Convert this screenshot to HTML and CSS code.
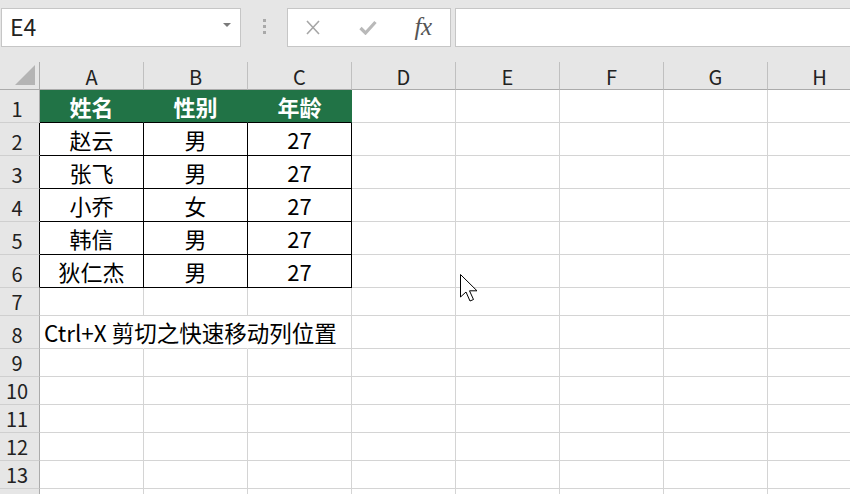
FILE: index.html
```html
<!DOCTYPE html>
<html lang="zh-CN">
<head>
<meta charset="utf-8">
<title>Excel</title>
<link rel="stylesheet" href="styles.css">
</head>
<body>
<div class="app">
  <div class="toolbar">
    <div class="namebox"><span class="ref">E4</span><span class="caret"></span></div>
    <div class="grip"><i></i><i></i><i></i></div>
    <div class="fbtns">
      <span class="slot"><svg width="14" height="15" viewBox="0 0 14 15"><path d="M1 1 L13 14 M13 1 L1 14" stroke="#a6a6a6" stroke-width="1.6" fill="none"/></svg></span>
      <span class="slot"><svg width="18" height="15" viewBox="0 0 18 15"><path d="M1.5 8 L6.5 13 L16.5 2" stroke="#b9b9b9" stroke-width="3.2" fill="none"/></svg></span>
      <span class="slot fx">fx</span>
    </div>
    <div class="formula"></div>
  </div>
  <div class="sheet">
    <div class="row hdr">
      <div class="corner"><span class="tri"></span></div>
      <div class="ch">A</div><div class="ch">B</div><div class="ch">C</div><div class="ch">D</div><div class="ch">E</div><div class="ch">F</div><div class="ch">G</div><div class="ch">H</div>
    </div>
    <div class="row tall">
      <div class="rh">1</div>
      <div class="c th">姓名</div><div class="c th">性别</div><div class="c th">年龄</div><div class="c"></div><div class="c"></div><div class="c"></div><div class="c"></div><div class="c"></div>
    </div>
    <div class="row tall">
      <div class="rh bk">2</div>
      <div class="c tb">赵云</div><div class="c tb">男</div><div class="c tb">27</div><div class="c"></div><div class="c"></div><div class="c"></div><div class="c"></div><div class="c"></div>
    </div>
    <div class="row tall">
      <div class="rh bk">3</div>
      <div class="c tb">张飞</div><div class="c tb">男</div><div class="c tb">27</div><div class="c"></div><div class="c"></div><div class="c"></div><div class="c"></div><div class="c"></div>
    </div>
    <div class="row tall">
      <div class="rh bk">4</div>
      <div class="c tb">小乔</div><div class="c tb">女</div><div class="c tb">27</div><div class="c"></div><div class="c"></div><div class="c"></div><div class="c"></div><div class="c"></div>
    </div>
    <div class="row tall">
      <div class="rh bk">5</div>
      <div class="c tb">韩信</div><div class="c tb">男</div><div class="c tb">27</div><div class="c"></div><div class="c"></div><div class="c"></div><div class="c"></div><div class="c"></div>
    </div>
    <div class="row tall">
      <div class="rh bk">6</div>
      <div class="c tb">狄仁杰</div><div class="c tb">男</div><div class="c tb">27</div><div class="c"></div><div class="c"></div><div class="c"></div><div class="c"></div><div class="c"></div>
    </div>
    <div class="row">
      <div class="rh">7</div>
      <div class="c"></div><div class="c"></div><div class="c"></div><div class="c"></div><div class="c"></div><div class="c"></div><div class="c"></div><div class="c"></div>
    </div>
    <div class="row tall">
      <div class="rh">8</div>
      <div class="c nr note"><span>Ctrl+X 剪切之快速移动列位置</span></div><div class="c nr"></div><div class="c"></div><div class="c"></div><div class="c"></div><div class="c"></div><div class="c"></div><div class="c"></div>
    </div>
    <div class="row">
      <div class="rh">9</div>
      <div class="c"></div><div class="c"></div><div class="c"></div><div class="c"></div><div class="c"></div><div class="c"></div><div class="c"></div><div class="c"></div>
    </div>
    <div class="row">
      <div class="rh">10</div>
      <div class="c"></div><div class="c"></div><div class="c"></div><div class="c"></div><div class="c"></div><div class="c"></div><div class="c"></div><div class="c"></div>
    </div>
    <div class="row">
      <div class="rh">11</div>
      <div class="c"></div><div class="c"></div><div class="c"></div><div class="c"></div><div class="c"></div><div class="c"></div><div class="c"></div><div class="c"></div>
    </div>
    <div class="row">
      <div class="rh">12</div>
      <div class="c"></div><div class="c"></div><div class="c"></div><div class="c"></div><div class="c"></div><div class="c"></div><div class="c"></div><div class="c"></div>
    </div>
    <div class="row">
      <div class="rh">13</div>
      <div class="c"></div><div class="c"></div><div class="c"></div><div class="c"></div><div class="c"></div><div class="c"></div><div class="c"></div><div class="c"></div>
    </div>
    <div class="row">
      <div class="rh"></div>
      <div class="c"></div><div class="c"></div><div class="c"></div><div class="c"></div><div class="c"></div><div class="c"></div><div class="c"></div><div class="c"></div>
    </div>
  </div>
  <svg class="cursor" width="20" height="30" viewBox="0 0 20 30">
    <path d="M0.5 0.5 L0.5 23 L6 18 L10 27 L13.5 25.5 L9.5 16.8 L17 16.8 Z" fill="#fff" stroke="#000" stroke-width="1"/>
  </svg>
</div>
</body>
</html>
```

FILE: styles.css
```css
html, body {
  margin: 0;
  padding: 0;
  background: #ffffff;
  overflow: hidden;
}

.app {
  position: relative;
  width: 850px;
  height: 494px;
  overflow: hidden;
  font-family: "Noto Sans CJK SC", sans-serif;
  color: #000;
}

.toolbar {
  height: 62px;
  box-sizing: border-box;
  background: #e6e6e6;
  display: flex;
  align-items: flex-start;
  padding-top: 8px;
}

.namebox {
  margin-left: 1px;
  width: 240px;
  height: 39px;
  box-sizing: border-box;
  border: 1px solid #c6c6c6;
  background: #fff;
  display: flex;
  align-items: center;
  justify-content: space-between;
  padding: 0 9px 0 8px;
}

.ref {
  font-size: 23px;
  line-height: 1;
  color: #222;
  margin-top: -2px;
}

.caret {
  width: 0;
  height: 0;
  border-left: 4px solid transparent;
  border-right: 4px solid transparent;
  border-top: 4px solid #7a7a7a;
  margin-top: -5px;
}

.grip {
  width: 46px;
  height: 39px;
  display: flex;
  flex-direction: column;
  align-items: center;
  padding-top: 11px;
  box-sizing: border-box;
  gap: 3px;
}

.grip i {
  display: block;
  width: 3px;
  height: 3px;
  background: #a9a9a9;
}

.fbtns {
  width: 164px;
  height: 39px;
  box-sizing: border-box;
  border: 1px solid #c6c6c6;
  background: #fff;
  display: flex;
  align-items: center;
  gap: 5px;
}

.slot {
  width: 50px;
  display: flex;
  justify-content: center;
  align-items: center;
}

.fx {
  font-family: "Liberation Serif", serif;
  font-style: italic;
  font-size: 25px;
  line-height: 1;
  color: #555;
  margin-top: -3px;
  letter-spacing: -0.5px;
}

.formula {
  margin-left: 4px;
  flex: 1;
  height: 39px;
  box-sizing: border-box;
  border: 1px solid #c6c6c6;
  border-right: none;
  background: #fff;
}

.sheet {
  display: flex;
  flex-direction: column;
}

.row {
  display: flex;
  height: 28px;
  flex-shrink: 0;
}

.row.tall {
  height: 33px;
}

.corner,
.rh {
  width: 40px;
  flex-shrink: 0;
  box-sizing: border-box;
  background: #e6e6e6;
  border-right: 1px solid #ababab;
}

.corner {
  border-bottom: 1px solid #ababab;
  position: relative;
}

.tri {
  position: absolute;
  right: 4px;
  bottom: 4px;
  width: 0;
  height: 0;
  border-left: 20px solid transparent;
  border-bottom: 20px solid #b4b4b4;
}

.rh {
  border-bottom: 1px solid #cfcfcf;
  display: flex;
  align-items: flex-end;
  justify-content: center;
  padding-right: 5px;
  padding-bottom: 1px;
  font-size: 20px;
  line-height: 24px;
  color: #222;
}

.rh.bk {
  border-right-color: #000;
}

.ch {
  width: 104px;
  flex-shrink: 0;
  box-sizing: border-box;
  background: #e6e6e6;
  border-right: 1px solid #c0c0c0;
  border-bottom: 1px solid #ababab;
  display: flex;
  align-items: center;
  justify-content: center;
  font-size: 20px;
  line-height: 1;
  padding-top: 3px;
  color: #222;
}

.c {
  width: 104px;
  flex-shrink: 0;
  box-sizing: border-box;
  border-right: 1px solid #d4d4d4;
  border-bottom: 1px solid #d4d4d4;
  display: flex;
  align-items: center;
  justify-content: center;
  font-size: 22px;
  line-height: 1;
  white-space: nowrap;
}

.c.th {
  background: #217346;
  color: #fff;
  font-weight: bold;
  border-right-color: #217346;
  border-bottom-color: #000;
}

.c.tb {
  border-right-color: #000;
  border-bottom-color: #000;
}

.c.nr {
  border-right-color: transparent;
}

.c.note {
  justify-content: flex-start;
  padding-left: 4px;
  overflow: visible;
  font-size: 22.5px;
}

.cursor {
  position: absolute;
  left: 460px;
  top: 274px;
}
```
